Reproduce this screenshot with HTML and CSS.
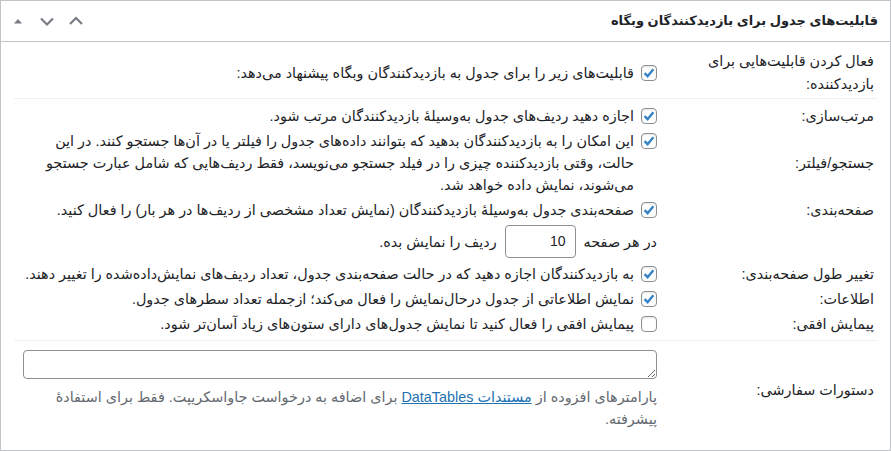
FILE: index.html
```html
<!DOCTYPE html>
<html lang="fa" dir="rtl">
<head>
<meta charset="utf-8">
<link rel="stylesheet" href="styles.css">
</head>
<body>
<div class="postbox">
  <div class="postbox-header">
    <h2 class="hndle">قابلیت‌های جدول برای بازدیدکنندگان وبگاه</h2>
    <div class="handle-actions">
      <button class="hbtn" aria-label="up"><svg width="20" height="20" viewBox="0 0 20 20"><path d="M4 13 L10 7 L16 13" fill="none" stroke="#787c82" stroke-width="2.2"/></svg></button>
      <button class="hbtn" aria-label="down"><svg width="20" height="20" viewBox="0 0 20 20"><path d="M4 7.5 L10 13.5 L16 7.5" fill="none" stroke="#787c82" stroke-width="2.2"/></svg></button>
      <button class="hbtn" aria-label="toggle"><svg width="20" height="20" viewBox="0 0 20 20"><path d="M6 12.5 L10 8 L14 12.5 Z" fill="#787c82"/></svg></button>
    </div>
  </div>
  <div class="inside">
    <table class="opts">
      <tbody>
        <tr>
          <th class="lbl lbl-first">فعال کردن قابلیت‌هایی برای بازدیدکننده:</th>
          <td><label class="cbrow"><span class="cb on"><svg viewBox="0 0 16 16" width="16" height="16"><path d="M3.6 8.2 L6.6 11.2 L12.4 4.2" fill="none" stroke="#3582c4" stroke-width="2.4"/></svg></span>قابلیت‌های زیر را برای جدول به بازدیدکنندگان وبگاه پیشنهاد می‌دهد:</label></td>
        </tr>
        <tr class="top-border">
          <th class="lbl">مرتب‌سازی:</th>
          <td><label class="cbrow"><span class="cb on"><svg viewBox="0 0 16 16" width="16" height="16"><path d="M3.6 8.2 L6.6 11.2 L12.4 4.2" fill="none" stroke="#3582c4" stroke-width="2.4"/></svg></span>اجازه دهید ردیف‌های جدول به‌وسیلهٔ بازدیدکنندگان مرتب شود.</label></td>
        </tr>
        <tr>
          <th class="lbl">جستجو/فیلتر:</th>
          <td><label class="cbrow"><span class="cb on"><svg viewBox="0 0 16 16" width="16" height="16"><path d="M3.6 8.2 L6.6 11.2 L12.4 4.2" fill="none" stroke="#3582c4" stroke-width="2.4"/></svg></span>این امکان را به بازدیدکنندگان بدهید که بتوانند داده‌های جدول را فیلتر یا در آن‌ها جستجو کنند. در این حالت، وقتی بازدیدکننده چیزی را در فیلد جستجو می‌نویسد، فقط ردیف‌هایی که شامل عبارت جستجو می‌شوند، نمایش داده خواهد شد.</label></td>
        </tr>
        <tr>
          <th class="lbl">صفحه‌بندی:</th>
          <td><label class="cbrow"><span class="cb on"><svg viewBox="0 0 16 16" width="16" height="16"><path d="M3.6 8.2 L6.6 11.2 L12.4 4.2" fill="none" stroke="#3582c4" stroke-width="2.4"/></svg></span>صفحه‌بندی جدول به‌وسیلهٔ بازدیدکنندگان (نمایش تعداد مشخصی از ردیف‌ها در هر بار) را فعال کنید.</label></td>
        </tr>
        <tr class="row-input">
          <th class="lbl"></th>
          <td><span class="perpage">در هر صفحه <span class="num">10</span> ردیف را نمایش بده.</span></td>
        </tr>
        <tr>
          <th class="lbl">تغییر طول صفحه‌بندی:</th>
          <td><label class="cbrow"><span class="cb on"><svg viewBox="0 0 16 16" width="16" height="16"><path d="M3.6 8.2 L6.6 11.2 L12.4 4.2" fill="none" stroke="#3582c4" stroke-width="2.4"/></svg></span>به بازدیدکنندگان اجازه دهید که در حالت صفحه‌بندی جدول، تعداد ردیف‌های نمایش‌داده‌شده را تغییر دهند.</label></td>
        </tr>
        <tr>
          <th class="lbl">اطلاعات:</th>
          <td><label class="cbrow"><span class="cb on"><svg viewBox="0 0 16 16" width="16" height="16"><path d="M3.6 8.2 L6.6 11.2 L12.4 4.2" fill="none" stroke="#3582c4" stroke-width="2.4"/></svg></span>نمایش اطلاعاتی از جدول درحال‌نمایش را فعال می‌کند؛ ازجمله تعداد سطرهای جدول.</label></td>
        </tr>
        <tr class="row-last">
          <th class="lbl">پیمایش افقی:</th>
          <td><label class="cbrow"><span class="cb"></span>پیمایش افقی را فعال کنید تا نمایش جدول‌های دارای ستون‌های زیاد آسان‌تر شود.</label></td>
        </tr>
        <tr class="top-border row-custom">
          <th class="lbl">دستورات سفارشی:</th>
          <td>
            <textarea class="code" dir="ltr" rows="1"></textarea>
            <p class="desc">پارامترهای افزوده از <a href="#">مستندات DataTables</a> برای اضافه به درخواست جاواسکریپت. فقط برای استفادهٔ پیشرفته.</p>
          </td>
        </tr>
      </tbody>
    </table>
  </div>
</div>
</body>
</html>
```
FILE: styles.css
```css
* { box-sizing: border-box; }
html, body { margin: 0; padding: 0; background: #fff; }
body {
  font-family: "Liberation Sans", "DejaVu Sans", sans-serif;
  font-size: 14.4px;
  color: #1d2327;
  width: 891px;
  height: 451px;
}
.postbox {
  width: 891px;
  height: 451px;
  border: 1px solid #c3c4c7;
  background: #fff;
}
.postbox-header {
  height: 41px;
  border-bottom: 1px solid #c3c4c7;
  display: flex;
  align-items: center;
  justify-content: space-between;
  padding: 0 12px 0 7px;
}
.hndle {
  margin: 0;
  font-size: 13px;
  font-weight: bold;
  line-height: 1.4;
}
.handle-actions {
  display: flex;
  direction: rtl;
  gap: 9px;
}
.hbtn {
  width: 20px;
  height: 36px;
  padding: 0;
  margin: 0;
  border: 0;
  background: none;
  display: flex;
  align-items: center;
  justify-content: center;
}
.hbtn svg { display: block; }
.inside {
  padding: 5px 13px 0 13px;
}
.opts {
  width: 100%;
  border-collapse: collapse;
}
.opts th, .opts td {
  padding: 2px 0 1px;
  line-height: 22px;
  vertical-align: middle;
  font-size: 14.4px;
}
.opts th {
  width: 210px;
  text-align: right;
  font-weight: normal;
  padding-right: 3px;
  padding-left: 40px;
}
.opts td {
  padding-right: 10px;
  padding-left: 7px;
}
.opts .lbl-first { padding-top: 3px; padding-bottom: 2px; line-height: 23px; }
.top-border th, .top-border td { border-top: 1px solid #f0f0f1; padding-top: 6px; }
.row-last th, .row-last td { padding-bottom: 5px; }
.cbrow {
  display: block;
  position: relative;
  padding-right: 23px;
}
.cb {
  position: absolute;
  right: 0;
  top: 3px;
  width: 16px;
  height: 16px;
  border: 1px solid #8c8f94;
  border-radius: 4px;
  background: #fff;
  box-shadow: inset 0 1px 2px rgba(0,0,0,0.1);
}
.cb svg { display: block; position: absolute; top: -1px; right: -1px; }
.row-input td { padding-top: 3px; padding-bottom: 3px; }
.perpage { display: inline-flex; align-items: center; gap: 4px; }
.num {
  display: inline-block;
  width: 71px;
  height: 33px;
  line-height: 31px;
  border: 1px solid #8c8f94;
  border-radius: 4px;
  text-align: right;
  padding-right: 9px;
  font-family: "Liberation Sans", sans-serif;
  font-size: 14px;
  margin: 0 4px;
}
.row-custom th, .row-custom td { padding-top: 9px; padding-bottom: 12px; }
.code {
  display: block;
  width: 634px;
  height: 29px;
  border: 1px solid #8c8f94;
  border-radius: 4px;
  margin: 0;
  padding: 2px 6px;
  resize: vertical;
  font-family: "Liberation Mono", monospace;
  font-size: 13px;
}
.desc {
  margin: 7px 0 0;
  color: #646970;
  line-height: 22px;
}
.desc a { color: #2271b1; text-decoration: underline; }
```
